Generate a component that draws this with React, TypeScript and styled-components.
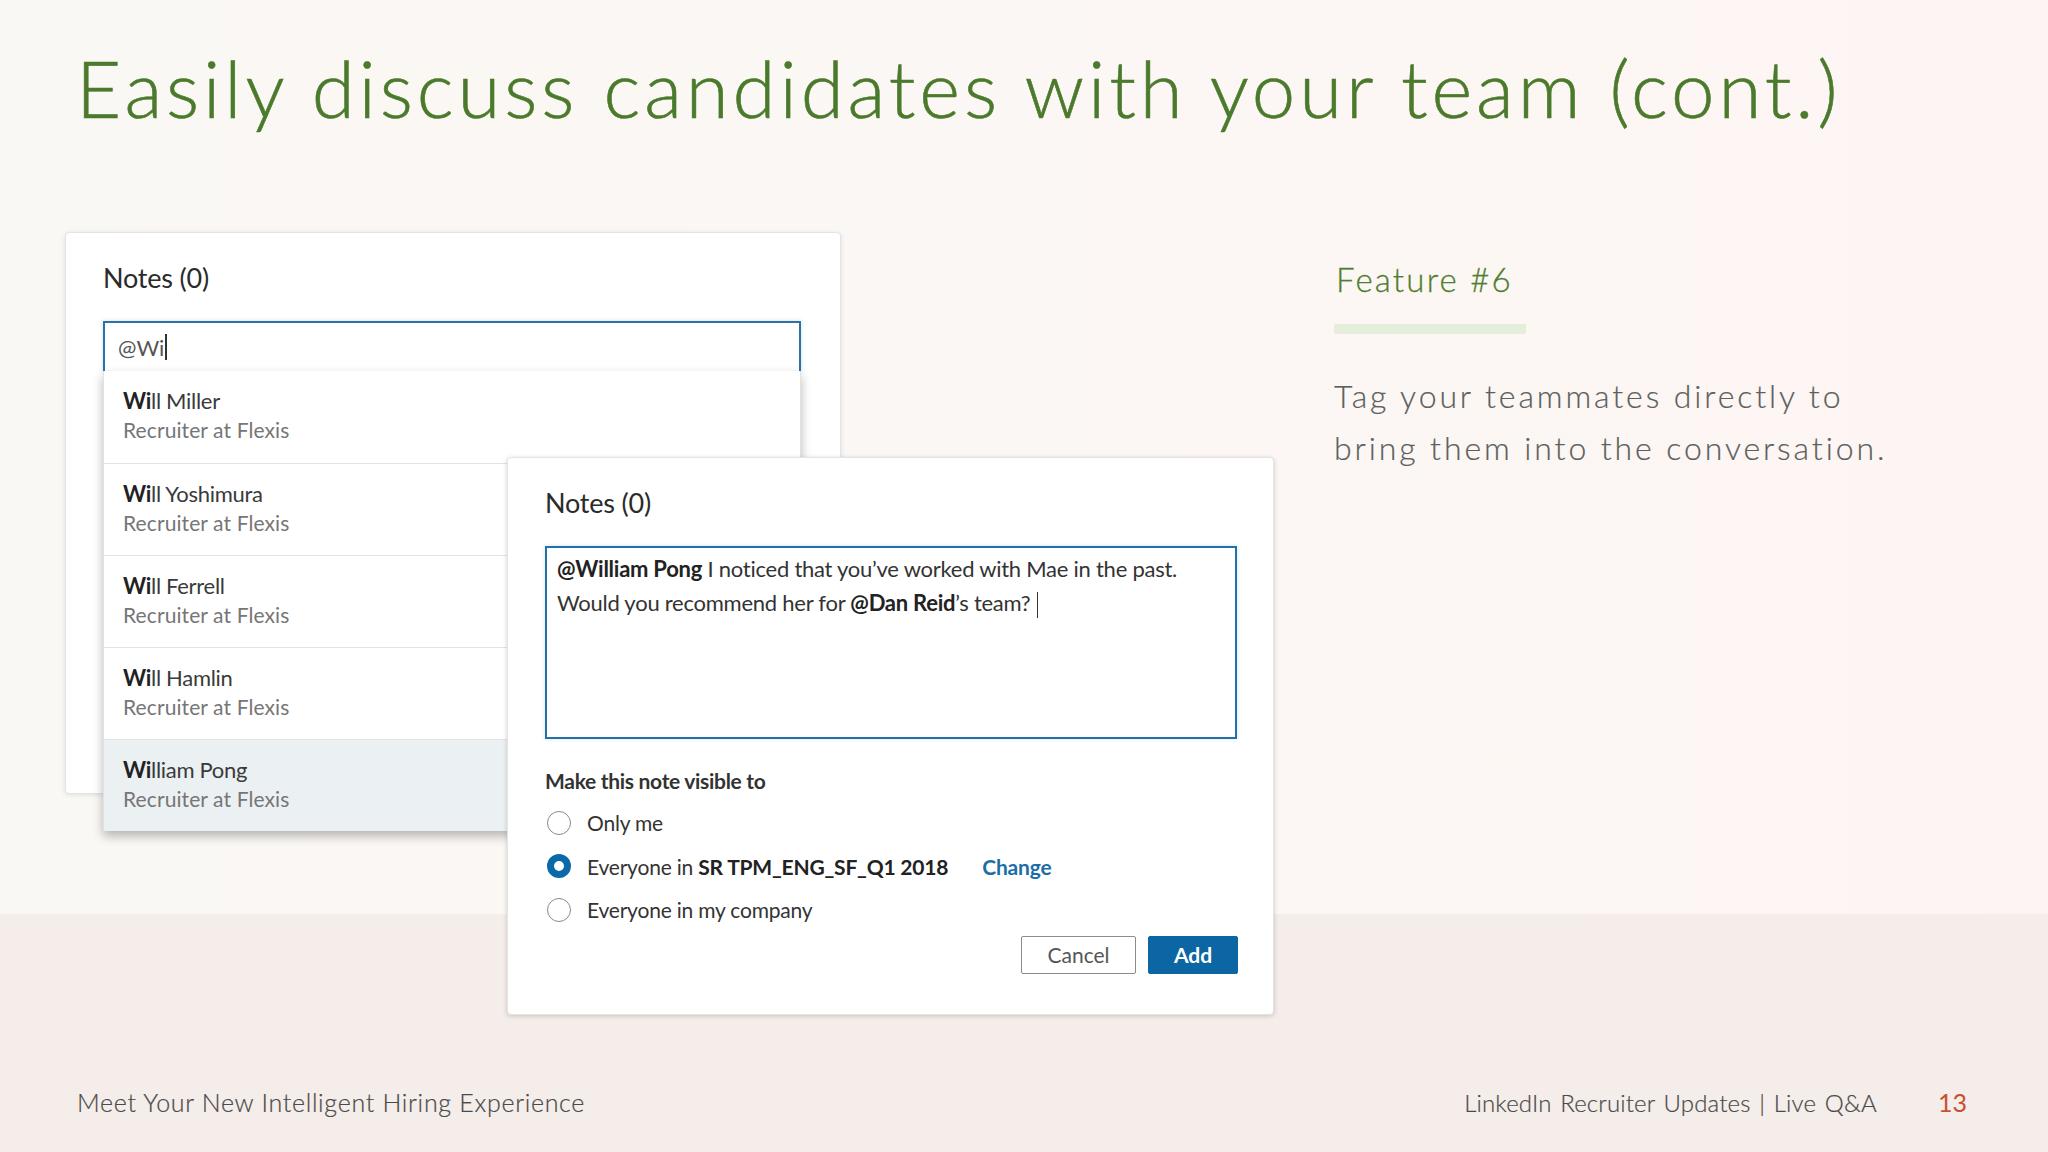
import styled, { createGlobalStyle } from "styled-components";

const GlobalStyle = createGlobalStyle`
  html, body {
    margin: 0;
    padding: 0;
  }
  body {
    font-family: Lato, "Noto Sans", sans-serif;
  }
`;

const Slide = styled.div`
  width: 2048px;
  height: 1152px;
  display: flex;
  flex-direction: column;
  overflow: hidden;
  background:
    linear-gradient(to bottom, transparent 0 914px, #f4ede9 914px 100%),
    linear-gradient(to right, #faf8f4 0%, #fcf7f4 60%, #fdf5f3 100%);
`;

const Title = styled.h1`
  margin: 49px 0 0 76px;
  font-family: Lato, sans-serif;
  font-weight: 300;
  font-size: 78px;
  line-height: 1;
  color: #4b7a2c;
  letter-spacing: 3.9px;
  white-space: nowrap;
  -webkit-text-stroke: 0.6px #4b7a2c;
`;

const Content = styled.div`
  display: flex;
  align-items: flex-start;
  margin-top: 105px;
`;

const Stage = styled.div`
  position: relative;
  width: 1209px;
  height: 790px;
  margin-left: 65px;
  flex-shrink: 0;
`;

const Card = styled.div<{ $left: number; $top: number; $w: number; $h: number; $front?: boolean }>`
  position: absolute;
  left: ${(p) => p.$left}px;
  top: ${(p) => p.$top}px;
  width: ${(p) => p.$w}px;
  height: ${(p) => p.$h}px;
  box-sizing: border-box;
  padding: 29px 37px 0 37px;
  background: #ffffff;
  border: 1px solid #e4e4e4;
  border-radius: 4px;
  box-shadow: 0 1px 5px rgba(0, 0, 0, ${(p) => (p.$front ? 0.18 : 0.1)});
  z-index: ${(p) => (p.$front ? 2 : 1)};
  color: #333;
`;

const CardTitle = styled.div`
  font-size: 27px;
  line-height: 32px;
  color: #2b2b2b;
  letter-spacing: -0.2px;
`;

const Combo = styled.div`
  position: relative;
  margin-top: 27px;
  width: 698px;
`;

const SearchInput = styled.div`
  height: 50px;
  box-sizing: border-box;
  border: 2px solid #2b72a9;
  border-bottom: none;
  padding: 0 13px;
  display: flex;
  align-items: center;
  font-size: 22px;
  color: #555;
  box-shadow: 0 0 4px rgba(43, 114, 169, 0.25);
`;

const Caret = styled.span<{ $h: number }>`
  display: inline-block;
  width: 1.5px;
  height: ${(p) => p.$h}px;
  background: #333;
  margin-left: 1px;
  vertical-align: middle;
`;

const Dropdown = styled.ul`
  position: absolute;
  top: 100%;
  left: 0;
  width: 100%;
  margin: 0;
  padding: 0;
  list-style: none;
  background: #fff;
  box-shadow: 0 5px 10px rgba(0, 0, 0, 0.28);
  border-left: 1px solid #e2e2e2;
  border-right: 1px solid #e2e2e2;
  box-sizing: border-box;
`;

const Option = styled.li<{ $active?: boolean }>`
  height: 92px;
  box-sizing: border-box;
  padding: 16px 19px 0;
  border-top: 1px solid #e3e3e3;
  background: ${(p) => (p.$active ? "#ebf0f3" : "#ffffff")};
  &:first-child {
    border-top: none;
  }
`;

const Name = styled.div`
  font-size: 22px;
  line-height: 28px;
  color: #3a3a3a;
  letter-spacing: -0.3px;
  b {
    font-weight: 700;
    color: #222;
  }
`;

const Role = styled.div`
  font-size: 21px;
  line-height: 30px;
  color: #767676;
  letter-spacing: 0.1px;
`;

const NoteBox = styled.div`
  margin-top: 27px;
  width: 692px;
  height: 193px;
  box-sizing: border-box;
  border: 2px solid #236fa8;
  padding: 4px 10px;
  font-size: 22px;
  line-height: 34px;
  color: #333;
  letter-spacing: -0.25px;
  box-shadow: 0 0 4px rgba(35, 111, 168, 0.2);
  b {
    font-weight: 700;
    color: #222;
  }
`;

const Label = styled.div`
  margin-top: 27px;
  font-size: 21px;
  line-height: 30px;
  font-weight: 700;
  color: #333;
  letter-spacing: -0.3px;
`;

const Choices = styled.div`
  margin-top: 5px;
  display: flex;
  flex-direction: column;
`;

const Choice = styled.label`
  height: 43.5px;
  display: flex;
  align-items: center;
  gap: 16px;
  font-size: 21px;
  color: #333;
  letter-spacing: -0.2px;
  b {
    font-weight: 700;
    color: #222;
  }
`;

const Radio = styled.span<{ $on?: boolean }>`
  width: 24px;
  height: 24px;
  margin-left: 2px;
  box-sizing: border-box;
  border-radius: 50%;
  flex-shrink: 0;
  background: #fff;
  border: ${(p) => (p.$on ? "7.5px solid #0b69a7" : "1.5px solid #8a8a8a")};
`;

const Change = styled.span`
  margin-left: 34px;
  color: #1b6ea8;
  font-weight: 700;
`;

const Actions = styled.div`
  margin-top: 4px;
  width: 693px;
  display: flex;
  justify-content: flex-end;
  gap: 12px;
`;

const Button = styled.button<{ $primary?: boolean }>`
  height: 38px;
  box-sizing: border-box;
  padding: 0;
  width: ${(p) => (p.$primary ? 90 : 115)}px;
  font-family: Lato, sans-serif;
  font-size: 21px;
  font-weight: ${(p) => (p.$primary ? 700 : 400)};
  border-radius: 2px;
  border: ${(p) => (p.$primary ? "1px solid #0b66a3" : "1.5px solid #8c8c8c")};
  background: ${(p) => (p.$primary ? "#0b66a3" : "#ffffff")};
  color: ${(p) => (p.$primary ? "#ffffff" : "#555555")};
`;

const Aside = styled.div`
  margin-left: 60px;
  padding-top: 27px;
  display: flex;
  flex-direction: column;
  align-items: flex-start;
`;

const FeatureTitle = styled.div`
  margin-left: 2px;
  font-size: 33px;
  line-height: 40px;
  font-weight: 300;
  letter-spacing: 2.2px;
  color: #4e7e2e;
  -webkit-text-stroke: 0.3px #4e7e2e;
`;

const Bar = styled.div`
  margin-top: 25px;
  width: 192px;
  height: 10px;
  border-radius: 2px;
  background: #e5eedb;
`;

const Blurb = styled.p`
  margin: 36px 0 0;
  font-size: 32px;
  line-height: 52px;
  font-weight: 300;
  letter-spacing: 2.9px;
  color: #5b605e;
  -webkit-text-stroke: 0.2px #5b605e;
`;

const Footer = styled.footer`
  margin-top: auto;
  padding: 0 81px 34px 77px;
  display: flex;
  align-items: baseline;
  font-size: 25px;
  line-height: 30px;
  font-weight: 300;
  color: #4a4a4a;
  -webkit-text-stroke: 0.2px #4a4a4a;
`;

const FooterNote = styled.span`
  flex: 1;
  letter-spacing: 0.7px;
`;

const FooterRight = styled.span`
  font-size: 24px;
  letter-spacing: 0.15px;
  word-spacing: 2px;
`;

const PageNum = styled.span`
  margin-left: 61px;
  color: #c8502d;
  font-size: 25px;
  font-weight: 400;
  -webkit-text-stroke: 0;
`;

const people = ["Will Miller", "Will Yoshimura", "Will Ferrell", "Will Hamlin", "William Pong"];

export default function App() {
  return (
    <>
      <GlobalStyle />
      <Slide>
        <Title>Easily discuss candidates with your team (cont.)</Title>
        <Content>
          <Stage>
            <Card $left={0} $top={0} $w={776} $h={562}>
              <CardTitle>Notes (0)</CardTitle>
              <Combo>
                <SearchInput>
                  @Wi
                  <Caret $h={26} />
                </SearchInput>
                <Dropdown>
                  {people.map((p, i) => (
                    <Option key={p} $active={i === people.length - 1}>
                      <Name>
                        <b>Wi</b>
                        {p.slice(2)}
                      </Name>
                      <Role>Recruiter at Flexis</Role>
                    </Option>
                  ))}
                </Dropdown>
              </Combo>
            </Card>
            <Card $left={442} $top={225} $w={767} $h={558} $front>
              <CardTitle>Notes (0)</CardTitle>
              <NoteBox>
                <b>@William Pong</b> I noticed that you’ve worked with Mae in the past.
                <br />
                Would you recommend her for <b>@Dan Reid</b>’s team? <Caret $h={26} />
              </NoteBox>
              <Label>Make this note visible to</Label>
              <Choices>
                <Choice>
                  <Radio />
                  Only me
                </Choice>
                <Choice>
                  <Radio $on />
                  <span>
                    Everyone in <b>SR TPM_ENG_SF_Q1 2018</b>
                    <Change>Change</Change>
                  </span>
                </Choice>
                <Choice>
                  <Radio />
                  Everyone in my company
                </Choice>
              </Choices>
              <Actions>
                <Button>Cancel</Button>
                <Button $primary>Add</Button>
              </Actions>
            </Card>
          </Stage>
          <Aside>
            <FeatureTitle>Feature #6</FeatureTitle>
            <Bar />
            <Blurb>
              Tag your teammates directly to
              <br />
              bring them into the conversation.
            </Blurb>
          </Aside>
        </Content>
        <Footer>
          <FooterNote>Meet Your New Intelligent Hiring Experience</FooterNote>
          <FooterRight>LinkedIn Recruiter Updates | Live Q&amp;A</FooterRight>
          <PageNum>13</PageNum>
        </Footer>
      </Slide>
    </>
  );
}
